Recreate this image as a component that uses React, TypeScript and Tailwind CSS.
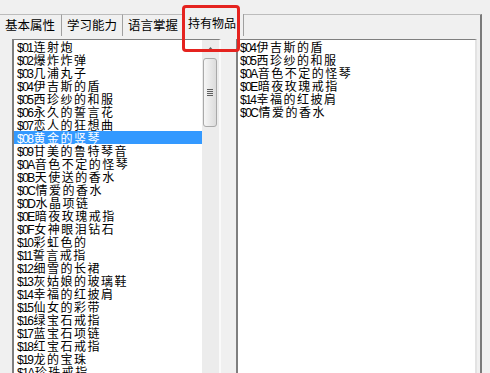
import React from "react";

type Item = { code: string; name: string };

const allItems: Item[] = [
  { code: "$01", name: "连射炮" },
  { code: "$02", name: "爆炸炸弹" },
  { code: "$03", name: "几浦丸子" },
  { code: "$04", name: "伊吉斯的盾" },
  { code: "$05", name: "西珍纱的和服" },
  { code: "$06", name: "永久的誓言花" },
  { code: "$07", name: "恋人的狂想曲" },
  { code: "$08", name: "黄金的竖琴" },
  { code: "$09", name: "甘美的鲁特琴音" },
  { code: "$0A", name: "音色不定的怪琴" },
  { code: "$0B", name: "天使送的香水" },
  { code: "$0C", name: "情爱的香水" },
  { code: "$0D", name: "水晶项链" },
  { code: "$0E", name: "暗夜玫瑰戒指" },
  { code: "$0F", name: "女神眼泪钻石" },
  { code: "$10", name: "彩虹色的" },
  { code: "$11", name: "誓言戒指" },
  { code: "$12", name: "细雪的长裙" },
  { code: "$13", name: "灰姑娘的玻璃鞋" },
  { code: "$14", name: "幸福的红披肩" },
  { code: "$15", name: "仙女的彩带" },
  { code: "$16", name: "绿宝石戒指" },
  { code: "$17", name: "蓝宝石项链" },
  { code: "$18", name: "红宝石戒指" },
  { code: "$19", name: "龙的宝珠" },
  { code: "$1A", name: "珍珠戒指" },
];

const ownedItems: Item[] = [
  { code: "$04", name: "伊吉斯的盾" },
  { code: "$05", name: "西珍纱的和服" },
  { code: "$0A", name: "音色不定的怪琴" },
  { code: "$0E", name: "暗夜玫瑰戒指" },
  { code: "$14", name: "幸福的红披肩" },
  { code: "$0C", name: "情爱的香水" },
];

const tabs = [
  { label: "基本属性", width: "w-[62px]" },
  { label: "学习能力", width: "w-[61px]" },
  { label: "语言掌握", width: "w-[60px]" },
];

const Row: React.FC<{ item: Item; selected?: boolean; pad: string }> = ({ item, selected, pad }) => (
  <div
    className={`h-[13px] whitespace-nowrap leading-[13px] ${pad} ${
      selected ? "bg-[#3399ff] text-white" : "text-black"
    }`}
  >
    <span className="text-[12px] tracking-[-1.5px]">{item.code}</span>
    <span className="ml-[1px] text-[12px] tracking-[1.5px]">{item.name}</span>
  </div>
);

const Scrollbar = () => (
  <div className="flex w-[17px] shrink-0 flex-col bg-[#ececec]">
    <div className="flex h-[18px] items-center justify-center">
      <svg width="7" height="4" viewBox="0 0 7 4">
        <path d="M3.5 0 L7 4 L0 4 Z" fill="#606060" />
      </svg>
    </div>
    <div className="ml-[1px] flex h-[69px] w-[14px] flex-col items-center justify-center gap-[1px] rounded-[3px] border border-[#a9a9a9] bg-gradient-to-r from-[#f6f6f6] to-[#dcdcdc]">
      <div className="h-[1px] w-[6px] bg-[#5f5f5f]" />
      <div className="h-[1px] w-[6px] bg-[#5f5f5f]" />
      <div className="h-[1px] w-[6px] bg-[#5f5f5f]" />
      <div className="h-[1px] w-[6px] bg-[#5f5f5f]" />
    </div>
  </div>
);

export default function App() {
  return (
    <div className="relative h-[373px] w-[490px] overflow-hidden bg-[#f0f0f0] font-['Liberation_Sans','Noto_Sans_CJK_SC',sans-serif] text-black">
      <div className="mt-[14px] w-[482px]">
        {/* tab strip */}
        <div className="flex h-[22px]">
          {tabs.map((t) => (
            <div
              key={t.label}
              className={`${t.width} flex items-center border-t border-r border-t-[#bcbcbc] border-r-[#a0a0a0] pl-[5px] pt-[2px] text-[12.5px]`}
            >
              {t.label}
            </div>
          ))}
          <div className="flex w-[61px] items-center border-r border-r-[#a0a0a0] pb-[2px] pl-[5px] text-[12px]">
            持有物品
          </div>
          <div className="flex-1 border-t border-r-2 border-t-[#bcbcbc] border-r-[#7a7a7a]" />
        </div>

        {/* tab page */}
        <div className="flex h-[337px] border-r-2 border-r-[#7a7a7a] pl-[12px] pt-[3px]">
          <div className="flex h-[360px] w-[209px] shrink-0 border-t border-l-2 border-r-2 border-t-[#7f7f7f] border-l-[#7f7f7f] border-r-[#fafafa] bg-white">
            <div className="w-[188px] shrink-0">
              {allItems.map((it) => (
                <Row key={it.code} item={it} selected={it.code === "$08"} pad="pl-[3px]" />
              ))}
            </div>
            <Scrollbar />
          </div>

          <div className="ml-[15px] h-[360px] w-[241px] shrink-0 border-t border-l-2 border-r-2 border-t-[#7f7f7f] border-l-[#7f7f7f] border-r-[#e3e3e3] bg-white">
            {ownedItems.map((it) => (
              <Row key={it.code} item={it} pad="pl-[2px]" />
            ))}
          </div>
        </div>
      </div>

      {/* red highlight around the selected tab */}
      <div className="absolute left-[182px] top-[5px] h-[47px] w-[58px] rounded-[4px] border-[3px] border-[#e5231f]" />
    </div>
  );
}
